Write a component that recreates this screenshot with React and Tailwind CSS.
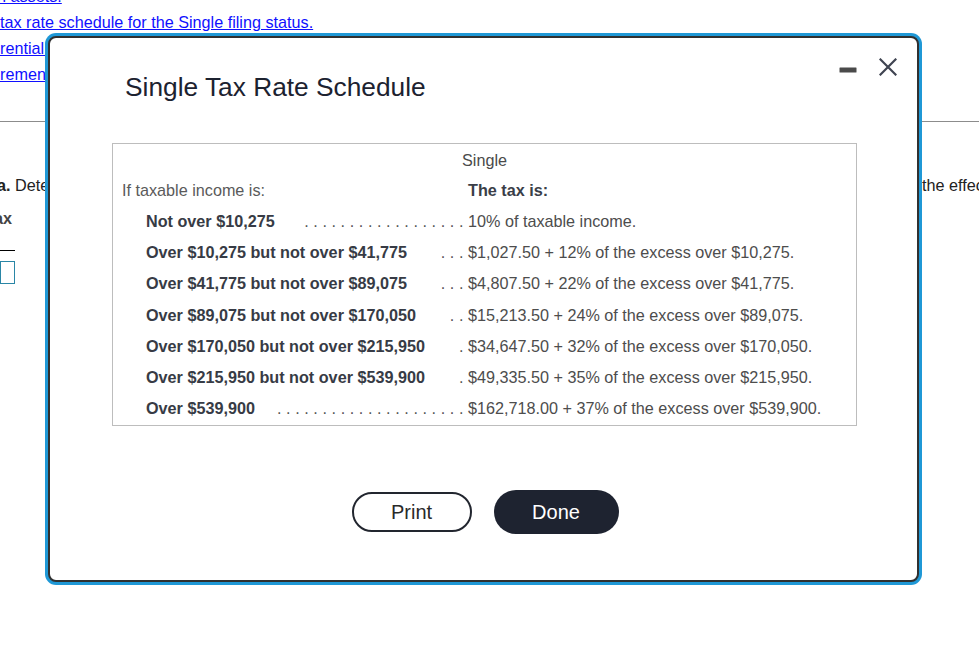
import React from "react";

const rows = [
  ["Not over $10,275", 18, "10% of taxable income."],
  ["Over $10,275 but not over $41,775", 3, "$1,027.50 + 12% of the excess over $10,275."],
  ["Over $41,775 but not over $89,075", 3, "$4,807.50 + 22% of the excess over $41,775."],
  ["Over $89,075 but not over $170,050", 2, "$15,213.50 + 24% of the excess over $89,075."],
  ["Over $170,050 but not over $215,950", 1, "$34,647.50 + 32% of the excess over $170,050."],
  ["Over $215,950 but not over $539,900", 1, "$49,335.50 + 35% of the excess over $215,950."],
  ["Over $539,900", 21, "$162,718.00 + 37% of the excess over $539,900."],
];

export default function App() {
  return (
    <div className="relative w-[979px] h-[653px] overflow-hidden bg-white font-['Liberation_Sans',Arial,sans-serif] text-[16.2px]">
      {/* background page */}
      <div className="-mt-[17px]">
        <div className="leading-[26px] text-[#1010ff] underline whitespace-nowrap">
          <div className="-ml-[3px]">n assets.</div>
          <div>tax rate schedule for the Single filing status.</div>
          <div>rential income from the sale of assets</div>
          <div>rements for the deduction</div>
        </div>
        <div className="mt-[34px] h-px w-full bg-[#8c8c8c]" />
        <div className="mt-[51px] flex leading-[24px] text-[#222] whitespace-nowrap">
          <div className="-ml-[3px] w-[925px] shrink-0 overflow-hidden">
            <b>a.</b> Determine the tax liability and the average tax rate, then
          </div>
          <div className="shrink-0">the effective tax rate</div>
        </div>
        <div className="-ml-[6px] mt-[9px] leading-[24px] font-bold text-[#444] whitespace-nowrap">ax</div>
        <div className="mt-[20px] h-px w-[15px] bg-black" />
        <div className="mt-[10px] h-[23px] w-[15px] border border-[#2a86a6]" />
      </div>

      {/* modal */}
      <div className="absolute left-[45px] top-[33px] w-[877px] h-[552px] rounded-[11px] bg-[#1f98d6] p-[3px]">
        <div className="h-full rounded-[8px] border-2 border-[#303030] bg-white">
          <div className="flex items-start justify-between">
            <h2 className="ml-[75px] mt-[34px] text-[26.3px] leading-[30px] text-[#1c2230]">
              Single Tax Rate Schedule
            </h2>
            <div className="mt-[20px] mr-[20px] flex items-start gap-[22px]">
              <svg width="18" height="18" viewBox="0 0 18 18">
                <rect x="0.5" y="9.5" width="17" height="5" rx="0.5" fill="#4a4a4a" />
              </svg>
              <svg width="18" height="18" viewBox="0 0 18 18">
                <path d="M1.5 1.5 L16.5 16.5 M16.5 1.5 L1.5 16.5" stroke="#3f4451" strokeWidth="2.2" strokeLinecap="square" />
              </svg>
            </div>
          </div>

          <div className="ml-[62px] mt-[41px] w-[745px] border border-[#bdbdbd] pb-[1px]">
            <div className="flex h-[32px] items-center">
              <div className="w-[349px]" />
              <span className="text-[#4a4a4a]">Single</span>
            </div>
            <div className="flex h-[29px] items-center">
              <div className="w-[355px] pl-[9px] text-[#5a5a5a]">If taxable income is:</div>
              <span className="font-bold text-[#3a3e48]">The tax is:</span>
            </div>
            {rows.map(([label, n, text]) => (
              <div key={label} className="flex h-[31.33px] items-center whitespace-nowrap">
                <div className="flex w-[355px] items-center">
                  <span className="pl-[33px] font-bold text-[#373b45]">{label}</span>
                  <span className="flex-1 text-right tracking-[4.6px] text-[#555]">{".".repeat(n)}</span>
                </div>
                <span className="text-[#4d4d4d]">{text}</span>
              </div>
            ))}
          </div>

          <div className="mt-[64px] flex items-center justify-center gap-[22px] pl-[3px]">
            <button className="h-[40px] w-[120px] rounded-full border-2 border-[#22262f] bg-white text-[20px] text-[#2a2a2a]">
              Print
            </button>
            <button className="h-[44px] w-[125px] rounded-full bg-[#1e2330] text-[20px] text-white">
              Done
            </button>
          </div>
        </div>
      </div>
    </div>
  );
}
